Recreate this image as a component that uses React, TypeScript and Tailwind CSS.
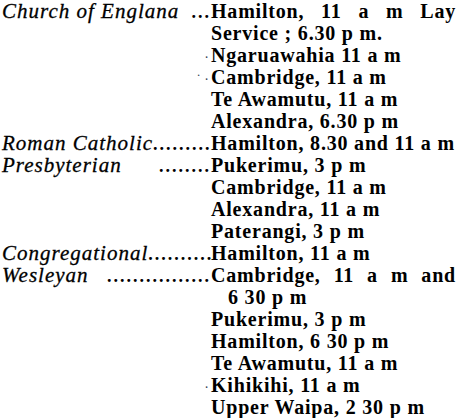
import React from 'react';

type Row = {
  label?: string;
  dots?: number;
  text: string;
  justify?: boolean;
  indent?: boolean;
  speck?: string;
};

// church services column, as set in the newspaper
const rows: Row[] = [
  { label: 'Church of Englana', dots: 3, text: 'Hamilton, 11 a m Lay', justify: true },
  { text: 'Service ; 6.30 p m.' },
  { text: 'Ngaruawahia 11 a m', speck: '·' },
  { text: 'Cambridge, 11 a m', speck: '\u02d9 \u00b7' },
  { text: 'Te Awamutu, 11 a m' },
  { text: 'Alexandra, 6.30 p m' },
  { label: 'Roman Catholic', dots: 9, text: 'Hamilton, 8.30 and 11 a m' },
  { label: 'Presbyterian', dots: 8, text: 'Pukerimu, 3 p m' },
  { text: 'Cambridge, 11 a m' },
  { text: 'Alexandra, 11 a m' },
  { text: 'Paterangi, 3 p m' },
  { label: 'Congregational', dots: 10, text: 'Hamilton, 11 a m' },
  { label: 'Wesleyan', dots: 16, text: 'Cambridge, 11 a m and', justify: true },
  { text: '6 30 p m', indent: true },
  { text: 'Pukerimu, 3 p m' },
  { text: 'Hamilton, 6 30 p m' },
  { text: 'Te Awamutu, 11 a m' },
  { text: 'Kihikihi, 11 a m', speck: '\u00b7' },
  { text: 'Upper Waipa, 2 30 p m' },
];

export default function App() {
  return (
    <div className='w-[457px] h-[418px] bg-white text-black overflow-hidden pl-[2px] font-["Liberation_Serif",serif]'>
      {rows.map((r, i) => (
        <div key={i} className="flex items-baseline h-[22px] leading-[22px]">
          <div className="w-[209px] shrink-0 flex items-baseline">
            {r.label && (
              <span className="italic font-normal text-[21px] leading-[20px] tracking-[1px] whitespace-nowrap [-webkit-text-stroke:0.3px_black]">
                {r.label}
              </span>
            )}
            {r.dots && (
              <span className="ml-auto font-bold text-[18px] tracking-[2px] whitespace-nowrap">
                {'.'.repeat(r.dots)}
              </span>
            )}
            {r.speck && (
              <span className="ml-auto mr-[2px] text-[14px] text-gray-700">{r.speck}</span>
            )}
          </div>
          <div
            className={
              'flex-1 min-w-0 pr-[1px] font-bold text-[20px] tracking-[0.8px] ' +
              (r.justify ? 'text-justify [text-align-last:justify] ' : 'whitespace-nowrap ') +
              (r.indent ? 'pl-[17px]' : '')
            }
          >
            {r.text}
          </div>
        </div>
      ))}
    </div>
  );
}
